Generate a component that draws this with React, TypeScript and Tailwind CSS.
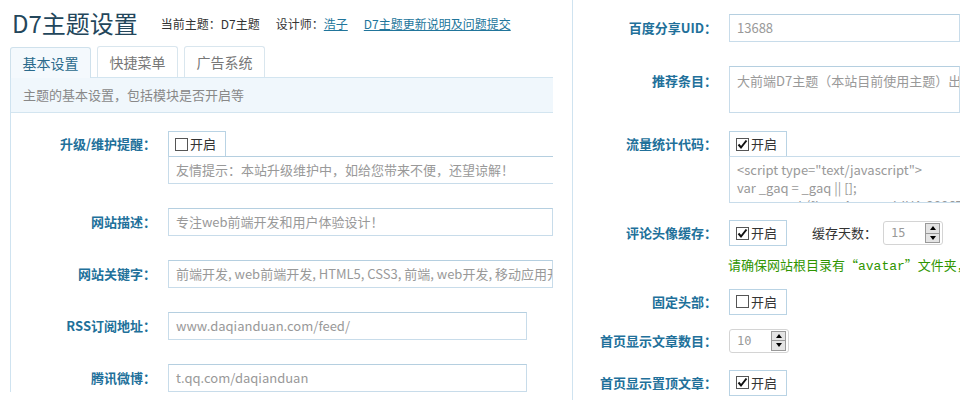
import React from 'react'

const FONT = { fontFamily: '"Noto Sans CJK SC", "Noto Sans", sans-serif' }

function Check({ checked }: { checked?: boolean }) {
  return (
    <span className="inline-flex w-[13px] h-[13px] border border-[#555] bg-white items-center justify-center mr-[2px]">
      {checked && (
        <svg width="11" height="11" viewBox="0 0 11 11">
          <path d="M1.5 5.5 L4 8.5 L9.5 1.5" stroke="#111" strokeWidth="2" fill="none" />
        </svg>
      )}
    </span>
  )
}

function CheckBox({ checked, className = '' }: { checked?: boolean; className?: string }) {
  return (
    <div className={`inline-flex items-center h-[26px] w-[58px] pl-[6px] border border-[#b9d3e4] bg-white text-[13px] text-[#333] ${className}`}>
      <Check checked={checked} />
      开启
    </div>
  )
}

function Spin({ value }: { value: string }) {
  return (
    <div className="flex items-center h-[24px] w-[60px] border border-[#d4d4d4] rounded-[3px] bg-white pl-[7px] pr-[2px]">
      <span className="flex-1 text-[12px] text-[#999]" style={{ fontFamily: '"DejaVu Sans Mono", monospace' }}>{value}</span>
      <div className="flex flex-col w-[15px] h-[20px] border border-[#999] bg-[#e4e4e4]">
        <div className="flex-1 flex items-center justify-center border-b border-[#999]">
          <div className="w-0 h-0 border-l-[3px] border-r-[3px] border-b-[4px] border-l-transparent border-r-transparent border-b-black" />
        </div>
        <div className="flex-1 flex items-center justify-center">
          <div className="w-0 h-0 border-l-[3px] border-r-[3px] border-t-[4px] border-l-transparent border-r-transparent border-t-black" />
        </div>
      </div>
    </div>
  )
}

function Label({ children, w }: { children: React.ReactNode; w: string }) {
  return (
    <div className={`${w} shrink-0 text-right text-[13px] font-bold text-[#21709a] pr-[12px]`}>{children}</div>
  )
}

const inputCls = 'h-[28px] border border-[#c8dcea] border-t-[#b5cfe0] bg-white pl-[7px] flex items-center text-[13px] text-[#999] whitespace-nowrap overflow-hidden'

export default function App() {
  return (
    <div className="w-[960px] h-[400px] bg-white flex overflow-hidden" style={FONT}>
      {/* Left panel */}
      <div className="w-[553px] shrink-0 overflow-hidden">
        <div className="h-[46px] flex items-end pl-[12px] pb-[8px]">
          <h1 className="text-[24px] leading-[30px] text-[#23465b] whitespace-nowrap">D7主题设置</h1>
          <div className="ml-[23px] mb-[5px] flex gap-[16px] text-[12px] text-[#333] whitespace-nowrap">
            <span>当前主题：D7主题</span>
            <span>设计师：<span className="underline text-[#21759b]">浩子</span></span>
            <span className="underline text-[#21759b]">D7主题更新说明及问题提交</span>
          </div>
        </div>
        <div className="flex gap-[6px] pl-[10px] h-[31px]">
          <div className="w-[81px] border border-b-0 border-[#cfe1ec] rounded-t-[3px] bg-[#f4f9fd] flex items-center justify-center text-[14px] text-[#2a6a8c] relative top-[1px]">基本设置</div>
          <div className="w-[81px] border border-b-0 border-[#d9e6ee] rounded-t-[3px] bg-white flex items-center justify-center text-[14px] text-[#777]">快捷菜单</div>
          <div className="w-[81px] border border-b-0 border-[#d9e6ee] rounded-t-[3px] bg-white flex items-center justify-center text-[14px] text-[#777]">广告系统</div>
        </div>
        <div className="ml-[10px] border-l border-[#cfe3f0]">
          <div className="h-[36px] bg-[#f0f7fc] border-y border-[#d3e5f0] flex items-center pl-[12px] text-[13px] text-[#888]">
            主题的基本设置，包括模块是否开启等
          </div>
          <div className="pt-[18px] flex flex-col gap-[24px]">
            <div className="flex">
              <Label w="w-[157px] leading-[26px]">升级/维护提醒：</Label>
              <div className="flex flex-col">
                <CheckBox />
                <div className={`${inputCls} w-[420px] -mt-[1px]`}>友情提示：本站升级维护中，如给您带来不便，还望谅解！</div>
              </div>
            </div>
            <div className="flex items-center">
              <Label w="w-[157px]">网站描述：</Label>
              <div className={`${inputCls} w-[420px]`}>专注web前端开发和用户体验设计！</div>
            </div>
            <div className="flex items-center">
              <Label w="w-[157px]">网站关键字：</Label>
              <div className={`${inputCls} w-[420px]`}>前端开发, web前端开发, HTML5, CSS3, 前端, web开发, 移动应用开发, 前端工程师</div>
            </div>
            <div className="flex items-center">
              <Label w="w-[157px]">RSS订阅地址：</Label>
              <div className={`${inputCls} w-[359px]`}>www.daqianduan.com/feed/</div>
            </div>
            <div className="flex items-center">
              <Label w="w-[157px]">腾讯微博：</Label>
              <div className={`${inputCls} w-[359px]`}>t.qq.com/daqianduan</div>
            </div>
          </div>
        </div>
      </div>

      {/* Right panel */}
      <div className="ml-[19px] flex-1 border-l border-[#cfe3f0] overflow-hidden pt-[14px]">
        <div className="flex items-center">
          <Label w="w-[156px]">百度分享UID：</Label>
          <div className={`${inputCls} w-[300px]`}>13688</div>
        </div>
        <div className="flex mt-[24px]">
          <Label w="w-[156px] pt-[5px]">推荐条目：</Label>
          <div className="h-[47px] w-[300px] border border-[#c8dcea] border-t-[#b5cfe0] pl-[7px] pt-[4px] text-[13px] text-[#999] whitespace-nowrap overflow-hidden">
            大前端D7主题（本站目前使用主题）出售啦，欢迎购买！
          </div>
        </div>
        <div className="flex mt-[18px]">
          <Label w="w-[156px] leading-[26px]">流量统计代码：</Label>
          <div className="flex flex-col">
            <CheckBox checked />
            <div className="h-[47px] w-[300px] -mt-[1px] border border-[#c8dcea] pl-[7px] pt-[4px] text-[13px] leading-[18px] text-[#999] whitespace-pre overflow-hidden">
              {'<script type="text/javascript">\nvar _gaq = _gaq || [];\n  _gaq.push([\'_setAccount\', \'UA-28867524-1\']);'}
            </div>
          </div>
        </div>
        <div className="flex items-center mt-[17px]">
          <Label w="w-[156px]">评论头像缓存：</Label>
          <CheckBox checked />
          <span className="ml-[25px] mr-[6px] text-[13px] text-[#333]">缓存天数：</span>
          <Spin value="15" />
        </div>
        <div className="pl-[155px] mt-[9px] text-[13px] text-[#2f9500] whitespace-nowrap">
          请确保网站根目录有“<span style={{ fontFamily: '"Liberation Mono", monospace' }}>avatar</span>”文件夹，并设置为可写权限
        </div>
        <div className="flex items-center mt-[12px]">
          <Label w="w-[156px]">固定头部：</Label>
          <CheckBox />
        </div>
        <div className="flex items-center mt-[14px]">
          <Label w="w-[156px]">首页显示文章数目：</Label>
          <Spin value="10" />
        </div>
        <div className="flex items-center mt-[17px]">
          <Label w="w-[156px]">首页显示置顶文章：</Label>
          <CheckBox checked />
        </div>
      </div>
    </div>
  )
}
